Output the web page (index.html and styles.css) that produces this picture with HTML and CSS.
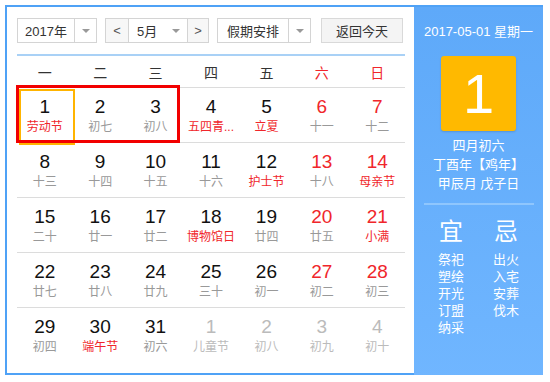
FILE: index.html
```html
<!DOCTYPE html>
<html lang="zh-CN">
<head>
<meta charset="utf-8">
<link rel="stylesheet" href="styles.css">
</head>
<body>
<div class="cal">
  <div class="main">
    <div class="toolbar">
      <div class="sel sel-year"><span class="sel-text">2017年</span><span class="sel-arrow"></span></div>
      <div class="sel sel-month">
        <span class="nav">&lt;</span>
        <span class="month"><span class="sel-text">5月</span><span class="caret"></span></span>
        <span class="nav nav-r">&gt;</span>
      </div>
      <div class="sel sel-hol"><span class="sel-text">假期安排</span><span class="sel-arrow"></span></div>
      <div class="btn">返回今天</div>
    </div>
    <div class="week">
      <span>一</span><span>二</span><span>三</span><span>四</span><span>五</span><span class="red">六</span><span class="red">日</span>
    </div>
    <div class="rows">
      <div class="row">
        <div class="sel-box"></div>
        <div class="day today"><b>1</b><i class="red">劳动节</i></div>
        <div class="day"><b>2</b><i>初七</i></div>
        <div class="day"><b>3</b><i>初八</i></div>
        <div class="day"><b>4</b><i class="red">五四青...</i></div>
        <div class="day"><b>5</b><i class="red">立夏</i></div>
        <div class="day"><b class="red">6</b><i>十一</i></div>
        <div class="day"><b class="red">7</b><i>十二</i></div>
      </div>
      <div class="row">
        <div class="day"><b>8</b><i>十三</i></div>
        <div class="day"><b>9</b><i>十四</i></div>
        <div class="day"><b>10</b><i>十五</i></div>
        <div class="day"><b>11</b><i>十六</i></div>
        <div class="day"><b>12</b><i class="red">护士节</i></div>
        <div class="day"><b class="red">13</b><i>十八</i></div>
        <div class="day"><b class="red">14</b><i class="red">母亲节</i></div>
      </div>
      <div class="row">
        <div class="day"><b>15</b><i>二十</i></div>
        <div class="day"><b>16</b><i>廿一</i></div>
        <div class="day"><b>17</b><i>廿二</i></div>
        <div class="day"><b>18</b><i class="red">博物馆日</i></div>
        <div class="day"><b>19</b><i>廿四</i></div>
        <div class="day"><b class="red">20</b><i>廿五</i></div>
        <div class="day"><b class="red">21</b><i class="red">小满</i></div>
      </div>
      <div class="row">
        <div class="day"><b>22</b><i>廿七</i></div>
        <div class="day"><b>23</b><i>廿八</i></div>
        <div class="day"><b>24</b><i>廿九</i></div>
        <div class="day"><b>25</b><i>三十</i></div>
        <div class="day"><b>26</b><i>初一</i></div>
        <div class="day"><b class="red">27</b><i>初二</i></div>
        <div class="day"><b class="red">28</b><i>初三</i></div>
      </div>
      <div class="row last">
        <div class="day"><b>29</b><i>初四</i></div>
        <div class="day"><b>30</b><i class="red">端午节</i></div>
        <div class="day"><b>31</b><i>初六</i></div>
        <div class="day other"><b>1</b><i>儿童节</i></div>
        <div class="day other"><b>2</b><i>初八</i></div>
        <div class="day other"><b>3</b><i>初九</i></div>
        <div class="day other"><b>4</b><i>初十</i></div>
      </div>
    </div>
  </div>
  <div class="side">
    <div class="side-date">2017-05-01 星期一</div>
    <div class="big">1</div>
    <div class="lunar">
      <div>四月初六</div>
      <div>丁酉年【鸡年】</div>
      <div>甲辰月 戊子日</div>
    </div>
    <div class="divider"></div>
    <div class="yiji">
      <div class="col">
        <div class="head">宜</div>
        <div>祭祀</div><div>塑绘</div><div>开光</div><div>订盟</div><div>纳采</div>
      </div>
      <div class="col">
        <div class="head">忌</div>
        <div>出火</div><div>入宅</div><div>安葬</div><div>伐木</div>
      </div>
    </div>
  </div>
</div>
</body>
</html>
```
FILE: styles.css
```css
* { box-sizing: border-box; }
body {
  margin: 0;
  background: #fff;
  font-family: "Liberation Sans", "Noto Sans CJK SC", sans-serif;
  color: #333;
}
.cal {
  margin: 5px 0 0 5px;
  width: 538px;
  height: 370px;
  border: 2px solid #4fa2f6;
  display: flex;
}
.main {
  width: 407px;
  padding: 11px 9px 0 10px;
}
.toolbar {
  display: flex;
  height: 25px;
  font-size: 13px;
}
.sel {
  display: flex;
  align-items: center;
  border: 1px solid #d4d4d4;
  height: 25px;
  background: #fff;
}
.sel-year { width: 80px; }
.sel-year .sel-text { width: 56px; text-align: center; }
.sel-arrow {
  flex: 1;
  height: 100%;
  border-left: 1px solid #d4d4d4;
  position: relative;
}
.sel-arrow::after, .caret::after {
  content: "";
  position: absolute;
  left: 50%;
  top: 50%;
  margin: -2px 0 0 -4px;
  border: 4px solid transparent;
  border-top: 4px solid #999;
  border-bottom: 0;
}
.sel-month { width: 104px; margin-left: 8px; }
.nav {
  width: 22px;
  height: 100%;
  display: flex;
  align-items: center;
  justify-content: center;
  color: #555;
  background: #f7f7f7;
  font-size: 13px;
}
.nav-r { width: 20px; }
.month {
  flex: 1;
  height: 100%;
  display: flex;
  align-items: center;
  border-left: 1px solid #d4d4d4;
  border-right: 1px solid #d4d4d4;
  position: relative;
}
.month .sel-text { padding-left: 8px; }
.caret {
  position: absolute;
  right: 0;
  top: 0;
  width: 22px;
  height: 100%;
}
.sel-hol { width: 94px; margin-left: 8px; }
.sel-hol .sel-text { width: 70px; text-align: center; }
.btn {
  margin-left: 10px;
  width: 82px;
  height: 25px;
  border: 1px solid #d9d9d9;
  background: #f4f4f4;
  display: flex;
  align-items: center;
  justify-content: center;
  font-size: 13px;
}
.week {
  margin-top: 11px;
  border-top: 2px solid #a9d1f6;
  border-bottom: 1px solid #dcdcdc;
  height: 34px;
  display: grid;
  grid-template-columns: repeat(7, 1fr);
  align-items: center;
  text-align: center;
  font-size: 14px;
  color: #333;
}
.red { color: #f0262b; }
.row {
  position: relative;
  display: grid;
  grid-template-columns: repeat(7, 1fr);
  height: 55px;
  border-bottom: 1px solid #dcdcdc;
}
.row.last { border-bottom: 0; }
.day {
  position: relative;
  display: flex;
  flex-direction: column;
  align-items: center;
  padding-top: 8px;
}
.day b {
  font-weight: normal;
  font-size: 19px;
  line-height: 22px;
  color: #111;
}
.day b.red { color: #f0262b; }
.day i {
  font-style: normal;
  font-size: 12px;
  line-height: 16px;
  margin-top: 1px;
  color: #999;
  white-space: nowrap;
}
.day i.red { color: #f0262b; }
.day.other b, .day.other i { color: #bbb; }
.today::after {
  content: "";
  position: absolute;
  left: 2px;
  top: 1px;
  width: 52px;
  height: 52px;
  border: 2px solid #ffb400;
}
.sel-box {
  position: absolute;
  left: -1px;
  top: -3px;
  width: 164px;
  height: 58px;
  border: 3px solid #f20000;
  z-index: 2;
  pointer-events: none;
}
.side {
  width: 129px;
  margin-right: -2px;
  margin-bottom: -9px;
  background: linear-gradient(#5ea9f9, #70b6ff);
  color: #fff;
  display: flex;
  flex-direction: column;
  align-items: center;
}
.side-date {
  margin-top: 17px;
  font-size: 13px;
  line-height: 16px;
}
.big {
  margin-top: 16px;
  width: 75px;
  height: 75px;
  background: #ffb900;
  border-radius: 3px;
  box-shadow: 0 1px 2px rgba(0,0,0,0.15);
  font-size: 56px;
  line-height: 75px;
  text-align: center;
}
.lunar {
  margin-top: 5px;
  font-size: 13px;
  line-height: 19px;
  text-align: center;
}
.divider {
  margin-top: 10px;
  width: 110px;
  height: 2px;
  background: #8fc6fd;
}
.yiji {
  margin-top: 12px;
  display: flex;
  gap: 29px;
}
.col {
  font-size: 13px;
  line-height: 17px;
  text-align: center;
}
.col .head {
  font-size: 24px;
  line-height: 30px;
  margin-bottom: 4px;
}
```
